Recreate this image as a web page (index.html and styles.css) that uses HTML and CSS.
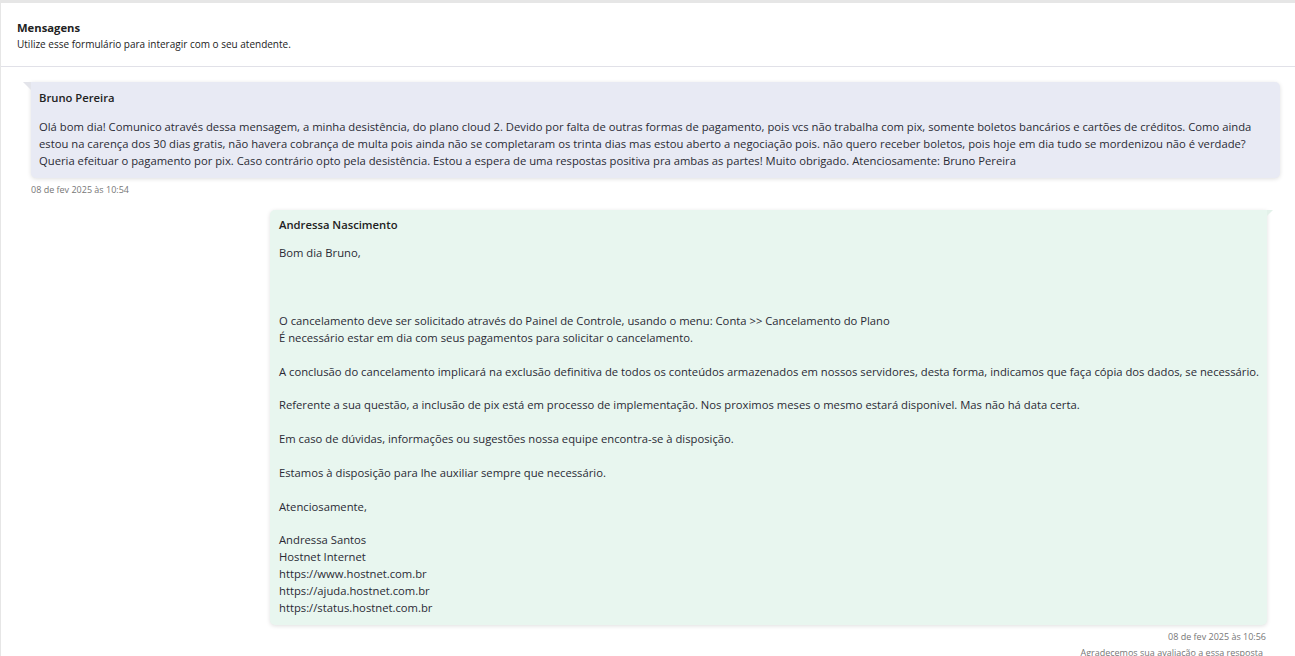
FILE: index.html
```html
<!DOCTYPE html>
<html lang="pt-BR">
   <head>
      <meta charset="utf-8">
      <title>Mensagens</title>
      <link rel="stylesheet" href="styles.css">
   </head>
   <body>
      <div class="panel">
      	<div class="panel-head">
      		<h2>Mensagens</h2>
      		<p>Utilize esse formulário para interagir com o seu atendente.</p>
      	</div>

      	<div class="thread">
      		<div class="msg client">
      			<div class="bubble">
      				<div class="author">Bruno Pereira</div>
      				<div class="text">Olá bom dia! Comunico através dessa mensagem, a minha desistência, do plano cloud 2. Devido por falta de outras formas de pagamento, pois vcs não trabalha com pix, somente boletos bancários e cartões de créditos. Como ainda estou na carença dos 30 dias gratis, não havera cobrança de multa pois ainda não se completaram os trinta dias mas estou aberto a negociação pois. não quero receber boletos, pois hoje em dia tudo se mordenizou não é verdade? Queria efeituar o pagamento por pix. Caso contrário opto pela desistência. Estou a espera de uma respostas positiva pra ambas as partes! Muito obrigado. Atenciosamente: Bruno Pereira</div>
      			</div>
      			<div class="date">08 de fev 2025 às 10:54</div>
      		</div>

      		<div class="msg agent">
      			<div class="bubble">
      				<div class="author">Andressa Nascimento</div>
      				<div class="text">Bom dia Bruno,<br><br><br><br>O cancelamento deve ser solicitado através do Painel de Controle, usando o menu: Conta &gt;&gt; Cancelamento do Plano<br>É necessário estar em dia com seus pagamentos para solicitar o cancelamento.<br><br>A conclusão do cancelamento implicará na exclusão definitiva de todos os conteúdos armazenados em nossos servidores, desta forma, indicamos que faça cópia dos dados, se necessário.<br><br>Referente a sua questão, a inclusão de pix está em processo de implementação. Nos proximos meses o mesmo estará disponivel. Mas não há data certa.<br><br>Em caso de dúvidas, informações ou sugestões nossa equipe encontra-se à disposição.<br><br>Estamos à disposição para lhe auxiliar sempre que necessário.<br><br>Atenciosamente,<br><br>Andressa Santos<br>Hostnet Internet<br>https://www.hostnet.com.br<br>https://ajuda.hostnet.com.br<br>https://status.hostnet.com.br</div>
      			</div>
      			<div class="date">08 de fev 2025 às 10:56</div>
      			<div class="rating">Agradecemos sua avaliação a essa resposta</div>
      		</div>
      	</div>
      </div>
   </body>
</html>
```

FILE: styles.css
```css
body{
	margin:0;
	padding:3px 0 0 1px;
	background:#e6e6e6;
	font-family:"Open Sans","Noto Sans",sans-serif;
	color:#333;
}
.panel{
	background:#fff;
	min-height:700px;
}
.panel-head{
	padding:16px 16px 15px;
	border-bottom:1px solid #e1e1e8;
}
.panel-head h2{
	margin:0;
	font-size:11.25px;
	font-weight:700;
	line-height:17px;
	color:#222;
}
.panel-head p{
	margin:1px 0 0;
	font-size:10px;
	line-height:14px;
	color:#222;
}
.thread{
	padding:15px 0 0;
}
.msg{
	display:flex;
	flex-direction:column;
}
.bubble{
	position:relative;
	padding:8px 8px 8px;
	border-radius:0 5px 5px 5px;
	box-shadow:0 1px 4px rgba(0,0,0,.13);
	font-size:11.25px;
	line-height:1.5;
}
.bubble:before{
	content:'';
	position:absolute;
	top:0;
	width:0;
	height:0;
}
.client .bubble{
	margin:0 15px 0 30px;
	background:#e8eaf4;
}
.client .bubble:before{
	left:-8px;
	border-top:8px solid #e3e4ea;
	border-left:8px solid transparent;
}
.agent .bubble{
	margin:0 28px 0 269px;
	padding:7px 5px 8px 9px;
	border-radius:5px 0 5px 5px;
	background:#e8f6ef;
}
.agent .bubble:before{
	right:-6px;
	border-top:6px solid #e3f1ea;
	border-right:6px solid transparent;
}
.author{
	font-weight:600;
	color:#222;
	margin-bottom:12px;
}
.text{
	color:#2a2a35;
}
.date{
	margin-top:5px;
	font-size:9px;
	line-height:13px;
	color:#777;
}
.client .date{
	margin-left:30px;
	margin-bottom:14px;
}
.agent .date,
.agent .rating{
	align-self:flex-end;
	margin-right:29px;
}
.agent .rating{
	margin-right:32px;
}
.rating{
	margin-top:3px;
	font-size:9px;
	line-height:13px;
	color:#777;
}
```
